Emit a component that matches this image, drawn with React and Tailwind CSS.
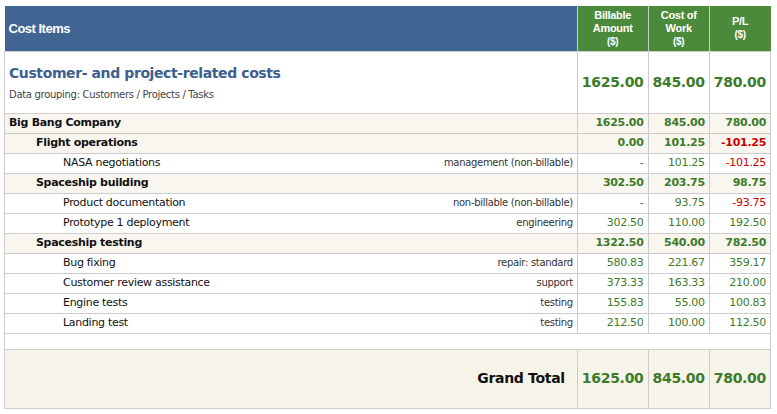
const rows = [
  { lvl: 0, name: "Big Bang Company", b: "1625.00", c: "845.00", p: "780.00" },
  { lvl: 1, name: "Flight operations", b: "0.00", c: "101.25", p: "-101.25" },
  { lvl: 2, name: "NASA negotiations", cat: "management (non-billable)", b: "-", c: "101.25", p: "-101.25" },
  { lvl: 1, name: "Spaceship building", b: "302.50", c: "203.75", p: "98.75" },
  { lvl: 2, name: "Product documentation", cat: "non-billable (non-billable)", b: "-", c: "93.75", p: "-93.75" },
  { lvl: 2, name: "Prototype 1 deployment", cat: "engineering", b: "302.50", c: "110.00", p: "192.50" },
  { lvl: 1, name: "Spaceship testing", b: "1322.50", c: "540.00", p: "782.50" },
  { lvl: 2, name: "Bug fixing", cat: "repair: standard", b: "580.83", c: "221.67", p: "359.17" },
  { lvl: 2, name: "Customer review assistance", cat: "support", b: "373.33", c: "163.33", p: "210.00" },
  { lvl: 2, name: "Engine tests", cat: "testing", b: "155.83", c: "55.00", p: "100.83" },
  { lvl: 2, name: "Landing test", cat: "testing", b: "212.50", c: "100.00", p: "112.50" },
];

const num = (v, bold) =>
  `border border-[#ccc] px-[4px] text-right ${v.startsWith("-") && v !== "-" ? "text-[#cc0000]" : "text-[#3d7a2a]"} ${bold ? "font-bold" : ""}`;

export default function App() {
  return (
    <div className="bg-white w-[777px] h-[414px] pt-[6px] pl-[4px]" style={{ fontFamily: "'DejaVu Sans', Verdana, sans-serif" }}>
      <table className="border-collapse w-[767px] text-[11px] tracking-[-0.3px]">
        <thead>
          <tr className="h-[45px] text-white font-bold" style={{ fontFamily: "'Liberation Sans', Arial, sans-serif" }}>
            <th className="bg-[#416593] text-left px-[4px] text-[13px] tracking-[-0.5px] font-bold">Cost Items</th>
            <th className="bg-[#4b8a3a] w-[64px] text-[11px] leading-[13px] border-l border-[#ccc]">Billable<br />Amount<br /><span className="text-[10px]">($)</span></th>
            <th className="bg-[#4b8a3a] w-[56px] text-[11px] leading-[13px] border-l border-[#ccc]">Cost of<br />Work<br /><span className="text-[10px]">($)</span></th>
            <th className="bg-[#4b8a3a] w-[56px] text-[11px] leading-[13px] border-l border-[#ccc]">P/L<br /><span className="text-[10px]">($)</span></th>
          </tr>
        </thead>
        <tbody>
          <tr className="h-[62px]">
            <td className="border border-[#ccc] px-[4px]">
              <div className="text-[#3d5f90] text-[14px] font-bold tracking-[-0.4px]">Customer- and project-related costs</div>
              <div className="text-[#444] text-[10px] mt-[3px]">Data grouping: Customers / Projects / Tasks</div>
            </td>
            <td className={num("1", true) + " text-[14px]"}>1625.00</td>
            <td className={num("1", true) + " text-[14px]"}>845.00</td>
            <td className={num("1", true) + " text-[14px]"}>780.00</td>
          </tr>
          {rows.map((r) => {
            const g = r.lvl < 2;
            return (
              <tr key={r.name} className={`h-[20px] ${g ? "bg-[#f8f6ef]" : "bg-white"}`}>
                <td className="border border-[#ccc] px-[4px] text-[#111]">
                  <div className="flex justify-between">
                    <span className={`${g ? "font-bold" : ""} ${r.lvl === 1 ? "pl-[27px]" : r.lvl === 2 ? "pl-[54px]" : ""}`}>{r.name}</span>
                    {r.cat && <span className="text-[#333] text-[10px]">{r.cat}</span>}
                  </div>
                </td>
                <td className={num(r.b, g)}>{r.b}</td>
                <td className={num(r.c, g)}>{r.c}</td>
                <td className={num(r.p, g)}>{r.p}</td>
              </tr>
            );
          })}
          <tr className="h-[16px]"><td colSpan={4} className="border border-[#ccc]"></td></tr>
          <tr className="h-[59px] bg-[#f6f3e8]">
            <td className="border border-[#ccc] px-[12px] text-right text-[14px] font-bold text-[#111]">Grand Total</td>
            <td className={num("1", true) + " text-[14px]"}>1625.00</td>
            <td className={num("1", true) + " text-[14px]"}>845.00</td>
            <td className={num("1", true) + " text-[14px]"}>780.00</td>
          </tr>
        </tbody>
      </table>
    </div>
  );
}
